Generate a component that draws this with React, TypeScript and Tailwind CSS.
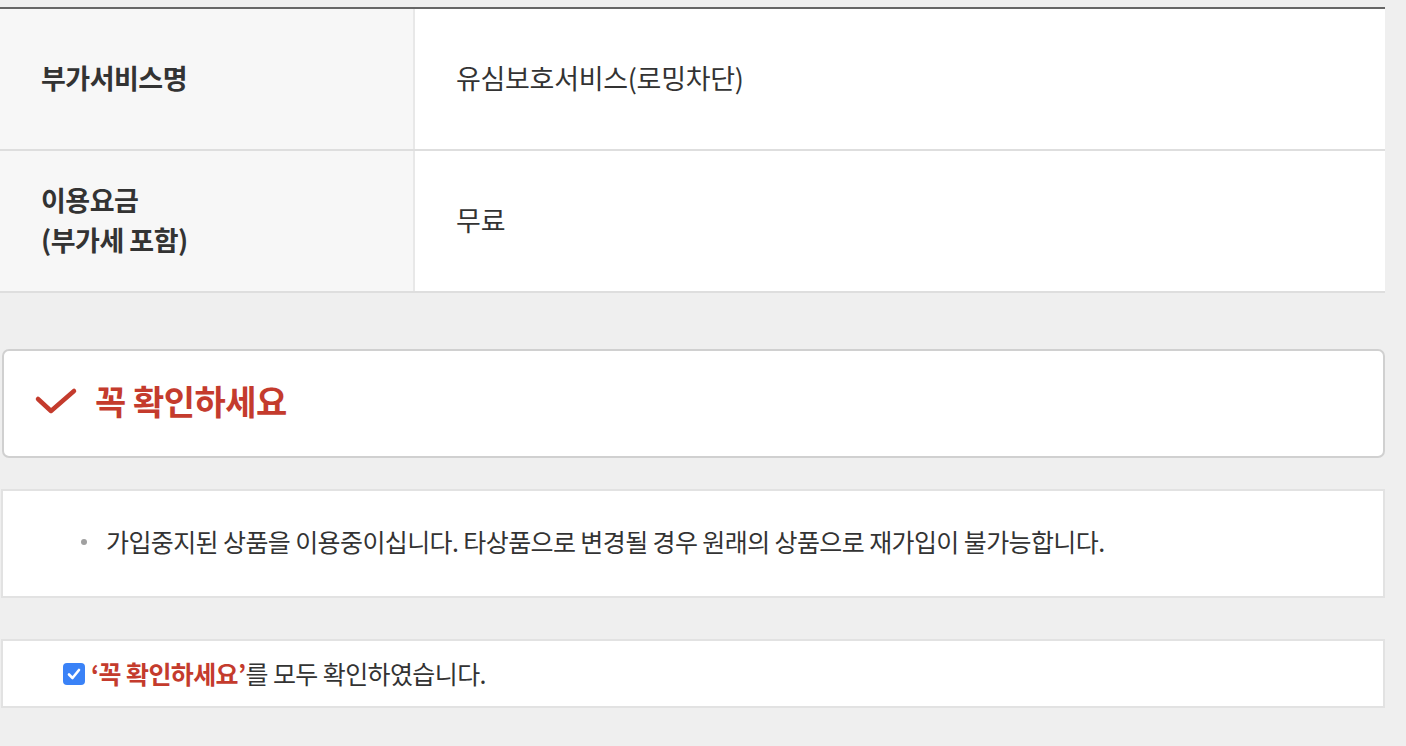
import React from "react";

export default function App() {
  const font = { fontFamily: '"Noto Sans CJK KR", "Noto Sans", sans-serif' };
  return (
    <div className="w-[1406px] h-[746px] bg-[#efefef] overflow-hidden text-[#333]" style={font}>
      <div className="w-[1385px] pt-[7px]">
        {/* table */}
        <div className="border-t-2 border-[#666]">
          <div className="flex h-[142px] border-b-2 border-[#dedede]">
            <div className="w-[415px] shrink-0 bg-[#f7f7f7] border-r-2 border-[#e8e8e8] flex items-center pl-[41px] pb-[2px] text-[27px] font-bold tracking-[-0.5px]">
              부가서비스명
            </div>
            <div className="flex-1 bg-white flex items-center pl-[41px] pb-[2px] text-[27px] tracking-[-0.3px]">
              유심보호서비스(로밍차단)
            </div>
          </div>
          <div className="flex h-[142px] border-b-2 border-[#dedede]">
            <div className="w-[415px] shrink-0 bg-[#f7f7f7] border-r-2 border-[#e8e8e8] flex items-center pl-[41px] pb-[2px] text-[27px] font-bold leading-[40px] tracking-[-0.5px]">
              <div>
                이용요금
                <br />
                (부가세 포함)
              </div>
            </div>
            <div className="flex-1 bg-white flex items-center pl-[41px] pb-[2px] text-[27px]">
              무료
            </div>
          </div>
        </div>

        {/* title box */}
        <div className="mt-[56px] ml-[2px] w-[1383px] h-[109px] bg-white border-2 border-[#d0d0d0] rounded-[7px] flex items-center pl-[30px] pb-[6px]">
          <svg width="44" height="32" viewBox="0 0 44 32" className="shrink-0">
            <path d="M4 14 L17 26 L40 6" fill="none" stroke="#c43b2d" strokeWidth="4.5" strokeLinecap="round" strokeLinejoin="round" />
          </svg>
          <span className="ml-[17px] text-[34px] font-bold text-[#c43b2d] tracking-[-0.5px]">꼭 확인하세요</span>
        </div>

        {/* notice */}
        <div className="mt-[31px] ml-[1px] w-[1384px] h-[109px] bg-white border-2 border-[#e2e2e2] flex items-center pl-[78px] pb-[4px]">
          <span className="w-[6px] h-[6px] rounded-full bg-[#a0a0a0] shrink-0" />
          <span className="ml-[19px] text-[25px] tracking-[-0.6px]">
            가입중지된 상품을 이용중이십니다. 타상품으로 변경될 경우 원래의 상품으로 재가입이 불가능합니다.
          </span>
        </div>

        {/* agree */}
        <div className="mt-[41px] ml-[1px] w-[1384px] h-[69px] bg-white border-2 border-[#e2e2e2] flex items-center pl-[60px]">
          <span className="w-[22px] h-[22px] rounded-[4px] bg-[#3a82f7] flex items-center justify-center shrink-0">
            <svg width="16" height="16" viewBox="0 0 16 16">
              <path d="M3 8.5 L6.5 12 L13 4" fill="none" stroke="white" strokeWidth="2.6" strokeLinecap="round" strokeLinejoin="round" />
            </svg>
          </span>
          <span className="ml-[6px] text-[25px] tracking-[-0.6px]">
            <span className="font-bold text-[#c43b2d]">‘꼭 확인하세요’</span>를 모두 확인하였습니다.
          </span>
        </div>
      </div>
    </div>
  );
}
